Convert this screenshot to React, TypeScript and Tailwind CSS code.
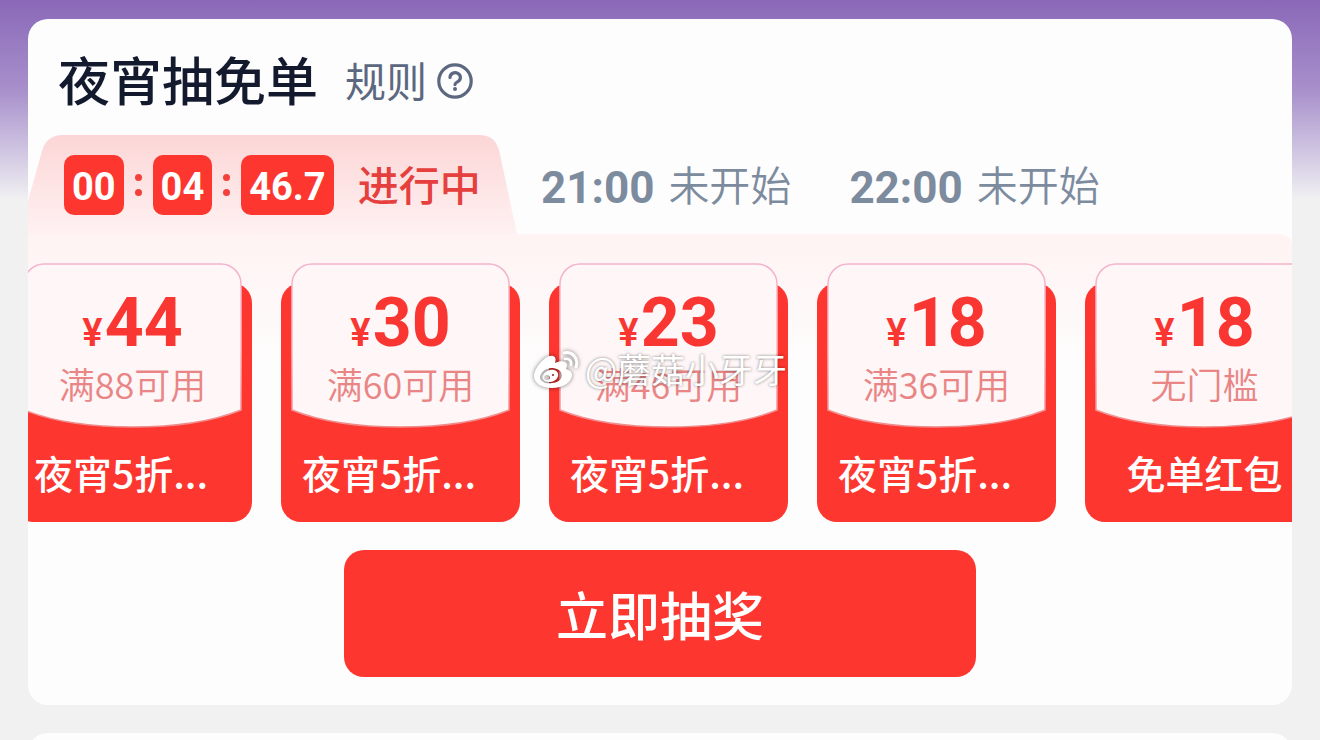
import { useId } from 'react';

const cjk = 'font-["Noto_Sans_CJK_SC",sans-serif]';
const digits = 'font-[Roboto,"Noto_Sans_CJK_SC",sans-serif]';

const countdown = ['00', '04', '46.7'];

const upcoming = [
  { time: '21:00', status: '未开始' },
  { time: '22:00', status: '未开始' },
];

const coupons = [
  { id: 1, amount: '44', condition: '满88可用', label: '夜宵5折...' },
  { id: 2, amount: '30', condition: '满60可用', label: '夜宵5折...' },
  { id: 3, amount: '23', condition: '满46可用', label: '夜宵5折...' },
  { id: 4, amount: '18', condition: '满36可用', label: '夜宵5折...' },
  { id: 5, amount: '18', condition: '无门槛', label: '免单红包' },
];

type Coupon = (typeof coupons)[number];

function HelpIcon() {
  return (
    <svg viewBox="0 0 36 36" className="size-9" fill="none" stroke="currentColor" aria-hidden="true">
      <circle cx="18" cy="18" r="16.2" strokeWidth="3.2" />
      <path d="M13 14.400a5.200 4.800 0 1 1 7.800 4.200c-1.700.9-2.800 1.300-2.800 3" strokeWidth="3.2" strokeLinecap="round" />
      <circle cx="18" cy="26" r="2" fill="currentColor" stroke="none" />
    </svg>
  );
}

function WeiboLogo() {
  return (
    <svg viewBox="0 0 46 38" className="h-[38px] w-[46px] drop-shadow-[0_0_2px_rgba(0,0,0,0.5)]" fill="none" aria-hidden="true">
      <path
        fillRule="evenodd"
        fill="#fff"
        d="M20 5c3 1 3 4 2 7 6-3 12-2 12 2 0 2-1 3-1 4 4 1 6 3 6 6 0 7-9 13-20 13C8 37 1 32 1 25 1 17 13 3 20 5Zm-2 12C11 18 7 22 7 27c1 4 6 6 12 5 6 0 10-4 10-8-1-5-5-7-11-7Z"
      />
      <path
        fillRule="evenodd"
        fill="#fff"
        d="M17 19c5-1 9 2 8 6-1 4-5 6-9 6-4 0-7-3-6-6s3-5 7-6Zm-3 5a3 2.600 0 1 0 1 5 3 2.600 0 0 0-1-5Zm6-1a1 1 0 1 0 0 2 1 1 0 0 0 0-2Z"
      />
      <path d="M32 8c4-1 7 2 6 6" stroke="#fff" strokeWidth="2.6" strokeLinecap="round" />
      <path d="M31 2c8-2 15 5 12 14" stroke="#fff" strokeWidth="3" strokeLinecap="round" />
    </svg>
  );
}

function ActiveTabShape() {
  const id = useId();
  return (
    <svg viewBox="0 0 489 99" preserveAspectRatio="none" className="absolute inset-0 size-full" aria-hidden="true">
      <defs>
        <linearGradient id={id} x1="0" y1="0" x2="0" y2="1">
          <stop offset="0" stopColor="#fcd6d6" />
          <stop offset="1" stopColor="#fff1f2" />
        </linearGradient>
      </defs>
      <path fill={`url(#${id})`} d="M0 66 14 16C17 5 24 0 35 0H451C462 0 468 5 471 15L489 99H0Z" />
    </svg>
  );
}

function CouponCard({ coupon }: { coupon: Coupon }) {
  const id = useId();
  const truncated = coupon.label.endsWith('...');
  return (
    <li className="relative flex w-[239px] shrink-0 flex-col">
      <div className="absolute inset-x-0 top-5 bottom-0 rounded-[20px] bg-[#fd362f]" />
      <div className="relative mx-[10px] flex h-[165px] flex-col items-center pt-6">
        <svg viewBox="0 0 219 165" preserveAspectRatio="none" className="absolute inset-0 size-full" aria-hidden="true">
          <defs>
            <linearGradient id={id} x1="0" y1="0" x2="0" y2="1">
              <stop offset="0" stopColor="#f3b3cd" />
              <stop offset="0.5" stopColor="#fbb9c0" />
              <stop offset="1" stopColor="#f08a8a" />
            </linearGradient>
          </defs>
          <path
            d="M1 147V21A20 20 0 0 1 21 1H198A20 20 0 0 1 218 21V147Q176 164 109.500 164T1 147Z"
            fill="#fef6f7"
            stroke={`url(#${id})`}
            strokeWidth="1.500"
          />
        </svg>
        <p className={`relative flex items-baseline gap-[2px] font-bold text-[#f93631] ${digits}`}>
          <span className="text-[38px] leading-none font-semibold">¥</span>
          <span className="text-[68px] leading-[72px]">{coupon.amount}</span>
        </p>
        <p className={`relative text-[36px] leading-[48px] font-[350] text-[#e98585] ${cjk}`}>{coupon.condition}</p>
      </div>
      <p
        className={`relative px-[21px] pt-4 pb-[22px] text-[39px] leading-[56px] font-medium whitespace-nowrap text-white ${cjk} ${
          truncated ? 'text-left' : 'text-center'
        }`}
      >
        {coupon.label}
      </p>
    </li>
  );
}

export default function App() {
  return (
    <div className={`relative h-screen overflow-hidden bg-[#f1f1f2] ${cjk}`}>
      <main className="bg-linear-to-b from-[#8a68b8] via-[#a890cb] via-[90px] to-[#f1f1f2] to-[200px] px-7 pt-[19px]">
        <section className="overflow-hidden rounded-[20px] bg-[#fdfdfd] pb-7">
          <header className="flex items-center gap-[27px] px-[30px] pt-[22px] pb-[18px]">
            <h1 className="text-[52px] leading-[76px] font-medium text-[#141a2e]">夜宵抽免单</h1>
            <button type="button" className="flex items-center gap-[10px] pt-1 text-[41px] leading-[60px] text-[#5c6880]">
              <span className="pb-1">规则</span>
              <HelpIcon />
            </button>
          </header>

          <div role="tablist" className="flex h-[99px] items-stretch whitespace-nowrap">
            <button type="button" role="tab" aria-selected="true" className="relative flex w-[489px] items-center pl-9">
              <ActiveTabShape />
              <span className={`relative flex items-center font-bold ${digits}`}>
                {countdown.map((part, i) => (
                  <span key={part} className="flex items-center">
                    {i > 0 && (
                      <span className="flex w-[29px] flex-col items-center gap-2">
                        <i className="size-[7px] rounded-full bg-[#f4403c]" />
                        <i className="size-[7px] rounded-full bg-[#f4403c]" />
                      </span>
                    )}
                    <span className="flex h-[60px] min-w-[59px] items-center justify-center rounded-[10px] bg-[#fd362f] px-2 pt-[6px] text-[38px] text-white">
                      {part}
                    </span>
                  </span>
                ))}
              </span>
              <span className="relative ml-6 pb-1 text-[41px] leading-[60px] font-medium text-[#e5403d]">进行中</span>
            </button>
            {upcoming.map((slot) => (
              <button
                key={slot.time}
                type="button"
                role="tab"
                aria-selected="false"
                className="ml-6 flex items-center gap-[14px] pr-[34px] text-[#7c8b9e]"
              >
                <span className={`pt-[6px] text-[44px] font-bold ${digits}`}>{slot.time}</span>
                <span className="pb-1 text-[41px] leading-[60px] font-[350]">{slot.status}</span>
              </button>
            ))}
          </div>

          <div className="rounded-tr-[12px] bg-linear-to-b from-[#fff3f3] to-[#fdfdfd] to-[140px] pt-[29px]">
            <ul className="-ml-[15px] flex gap-[29px]">
              {coupons.map((coupon) => (
                <CouponCard key={coupon.id} coupon={coupon} />
              ))}
            </ul>
            <button
              type="button"
              className="mx-auto mt-7 block h-[127px] w-1/2 rounded-[20px] bg-[#fd362f] text-[52px] font-medium text-white"
            >
              立即抽奖
            </button>
          </div>
        </section>
        <section className="mt-7 h-40 rounded-[20px] bg-[#fdfdfd]" />
      </main>

      <div className="pointer-events-none absolute inset-0 flex items-center justify-center gap-[6px] text-[34px] font-normal text-white">
        <WeiboLogo />
        <span className="pb-1 [text-shadow:0_0_3px_rgba(0,0,0,0.5)]">@蘑菇小牙牙</span>
      </div>
    </div>
  );
}
